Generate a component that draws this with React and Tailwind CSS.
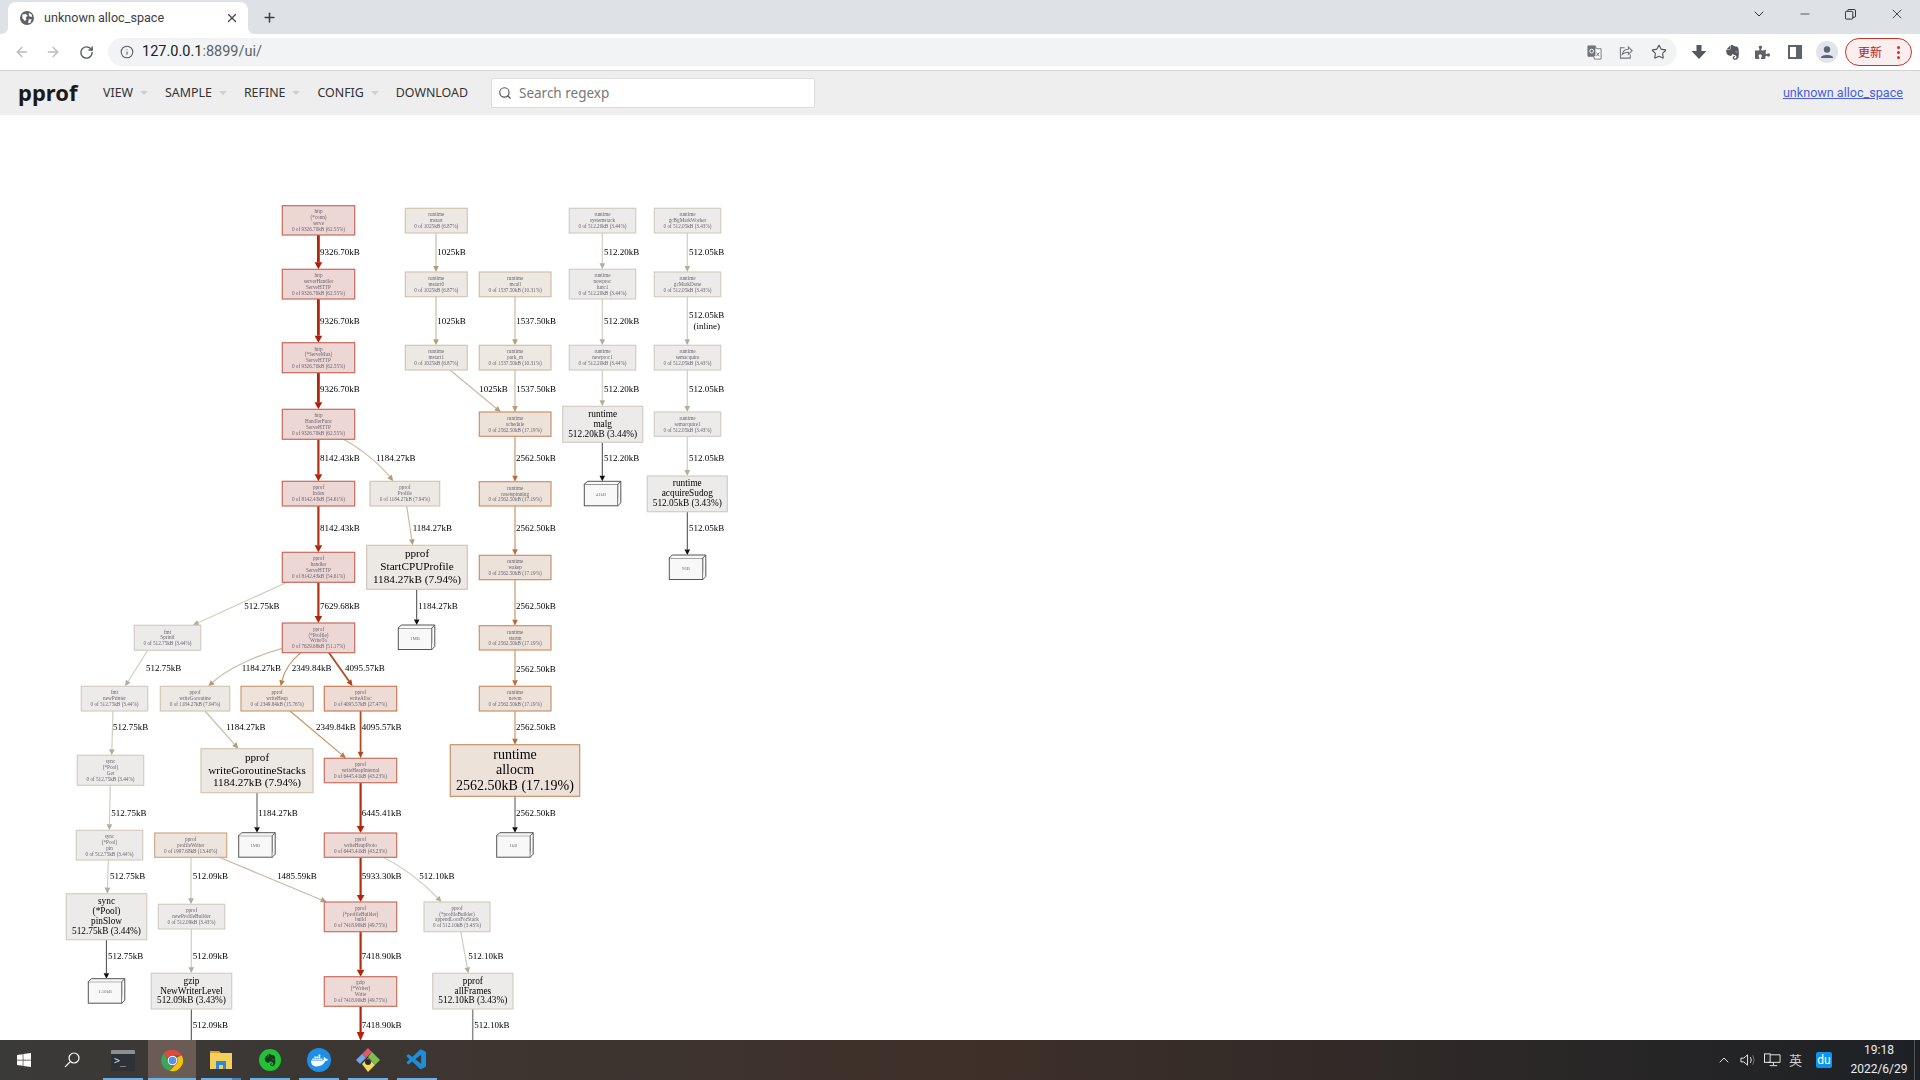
import { ArrowLeft, ArrowRight, RotateCw, Info, Plus, X, Star, ChevronDown, ChevronUp, Minus, Search } from "lucide-react";
import { FaEvernote, FaDocker, FaWindows, FaPuzzlePiece } from "react-icons/fa";
import { VscVscode } from "react-icons/vsc";

const PAL = {
  red: ["#edd7d5", "#c8695c"],
  red2: ["#edd9d5", "#c9705f"],
  alloc: ["#eddcd5", "#c97c55"],
  orange: ["#ede2d9", "#cb9166"],
  heap: ["#ede3da", "#cc9c70"],
  pw: ["#ede5dd", "#d0a885"],
  mcall: ["#ede8e2", "#d2bfa6"],
  tan: ["#ece9e4", "#d3c6b2"],
  grey: ["#ecebe9", "#d2cec4"],
};

// graph nodes, coordinates are page pixels
const NODES = [
  [282.3, 205.7, 72.4, 29.3, "red", ["http", "(*conn)", "serve", "0 of 9326.70kB (62.55%)"]],
  [282.3, 269.3, 72.4, 29.7, "red", ["http", "serverHandler", "ServeHTTP", "0 of 9326.70kB (62.55%)"]],
  [282.3, 342.7, 72.4, 30, "red", ["http", "(*ServeMux)", "ServeHTTP", "0 of 9326.70kB (62.55%)"]],
  [282.3, 409.3, 72.4, 30, "red", ["http", "HandlerFunc", "ServeHTTP", "0 of 9326.70kB (62.55%)"]],
  [282.3, 481.3, 72.4, 24.7, "red", ["pprof", "Index", "0 of 8142.43kB (54.61%)"]],
  [282.3, 552.3, 72.4, 30, "red", ["pprof", "handler", "ServeHTTP", "0 of 8142.43kB (54.61%)"]],
  [282.3, 623, 72.4, 29.7, "red", ["pprof", "(*Profile)", "WriteTo", "0 of 7629.68kB (51.17%)"]],
  [370, 481.3, 69.7, 24.7, "tan", ["pprof", "Profile", "0 of 1184.27kB (7.94%)"]],
  [134.3, 625.3, 66.4, 25, "grey", ["fmt", "Sprintf", "0 of 512.75kB (3.44%)"]],
  [81.3, 686.3, 66.4, 24.7, "grey", ["fmt", "newPrinter", "0 of 512.75kB (3.44%)"]],
  [160.3, 686.3, 69.4, 24.7, "tan", ["pprof", "writeGoroutine", "0 of 1184.27kB (7.94%)"]],
  [241, 686.3, 72.3, 24.7, "heap", ["pprof", "writeHeap", "0 of 2349.84kB (15.76%)"]],
  [324.3, 686.3, 72.4, 24.7, "alloc", ["pprof", "writeAlloc", "0 of 4095.57kB (27.47%)"]],
  [405.3, 208.3, 62, 24.7, "tan", ["runtime", "mstart", "0 of 1025kB (6.87%)"]],
  [405.3, 272, 62, 24.7, "tan", ["runtime", "mstart0", "0 of 1025kB (6.87%)"]],
  [405.3, 345.3, 62, 24.7, "tan", ["runtime", "mstart1", "0 of 1025kB (6.87%)"]],
  [479.3, 272, 71.7, 24.7, "mcall", ["runtime", "mcall", "0 of 1537.50kB (10.31%)"]],
  [479.3, 345.3, 71.7, 24.7, "mcall", ["runtime", "park_m", "0 of 1537.50kB (10.31%)"]],
  [479.3, 412, 71.7, 24.3, "orange", ["runtime", "schedule", "0 of 2562.50kB (17.19%)"]],
  [479.3, 481.7, 71.7, 24.3, "orange", ["runtime", "resetspinning", "0 of 2562.50kB (17.19%)"]],
  [479.3, 555.3, 71.7, 24.4, "orange", ["runtime", "wakep", "0 of 2562.50kB (17.19%)"]],
  [479.3, 625.7, 71.7, 24.3, "orange", ["runtime", "startm", "0 of 2562.50kB (17.19%)"]],
  [479.3, 686.3, 71.7, 24.7, "orange", ["runtime", "newm", "0 of 2562.50kB (17.19%)"]],
  [569.3, 208.3, 66.4, 24.7, "grey", ["runtime", "systemstack", "0 of 512.20kB (3.44%)"]],
  [569.3, 269.3, 66.4, 29.7, "grey", ["runtime", "newproc", "func1", "0 of 512.20kB (3.44%)"]],
  [569.3, 345.3, 66.4, 24.7, "grey", ["runtime", "newproc1", "0 of 512.20kB (3.44%)"]],
  [654.3, 208.3, 66.4, 24.7, "grey", ["runtime", "gcBgMarkWorker", "0 of 512.05kB (3.43%)"]],
  [654.3, 272, 66.4, 24.7, "grey", ["runtime", "gcMarkDone", "0 of 512.05kB (3.43%)"]],
  [654.3, 345.3, 66.4, 24.7, "grey", ["runtime", "semacquire", "0 of 512.05kB (3.43%)"]],
  [654.3, 412, 66.4, 24.3, "grey", ["runtime", "semacquire1", "0 of 512.05kB (3.43%)"]],
  [77.3, 755.3, 66.4, 30, "grey", ["sync", "(*Pool)", "Get", "0 of 512.75kB (3.44%)"]],
  [76.3, 830.3, 66.4, 29.7, "grey", ["sync", "(*Pool)", "pin", "0 of 512.75kB (3.44%)"]],
  [154.7, 833, 72, 24.3, "pw", ["pprof", "profileWriter", "0 of 1997.68kB (13.40%)"]],
  [158.3, 904.3, 66.4, 24.7, "grey", ["pprof", "newProfileBuilder", "0 of 512.09kB (3.43%)"]],
  [324.3, 758.3, 72.4, 24.4, "red2", ["pprof", "writeHeapInternal", "0 of 6445.41kB (43.23%)"]],
  [324.3, 833, 72.4, 24.3, "red2", ["pprof", "writeHeapProto", "0 of 6445.41kB (43.23%)"]],
  [324.3, 902, 72.4, 29.7, "red2", ["pprof", "(*profileBuilder)", "build", "0 of 7418.90kB (49.75%)"]],
  [324.3, 976.7, 72.4, 29.6, "red2", ["gzip", "(*Writer)", "Write", "0 of 7418.90kB (49.75%)"]],
  [424, 902, 66, 29.7, "grey", ["pprof", "(*profileBuilder)", "appendLocsForStack", "0 of 512.10kB (3.43%)"]],
];

// nodes with flat weight, larger text
const BIG = [
  [366.7, 545.3, 100.6, 44, "tan", ["pprof", "StartCPUProfile", "1184.27kB (7.94%)"], 11.2, 13],
  [201, 748.7, 112, 44, "tan", ["pprof", "writeGoroutineStacks", "1184.27kB (7.94%)"], 11.2, 12.8],
  [450.3, 744.7, 129.4, 51.6, "orange", ["runtime", "allocm", "2562.50kB (17.19%)"], 14, 15.4],
  [562.7, 406.3, 80, 36, "grey", ["runtime", "malg", "512.20kB (3.44%)"], 9.3, 9.9],
  [647.3, 476, 80, 35.7, "grey", ["runtime", "acquireSudog", "512.05kB (3.43%)"], 9.3, 9.9],
  [66.3, 893.7, 80.4, 46, "grey", ["sync", "(*Pool)", "pinSlow", "512.75kB (3.44%)"], 9.3, 9.9],
  [151.3, 973.3, 80.4, 35.7, "grey", ["gzip", "NewWriterLevel", "512.09kB (3.43%)"], 9.3, 9.9],
  [432.7, 973.3, 80.3, 35.7, "grey", ["pprof", "allFrames", "512.10kB (3.43%)"], 9.3, 9.9],
];

const LEAVES = [
  [398.3, 625, "1MB"],
  [238.7, 832.7, "1MB"],
  [496.7, 832.7, "1kB"],
  [584.3, 481.3, "41kB"],
  [669.3, 555, "96B"],
  [88.3, 978.7, "1.50kB"],
];

const EDGE = {
  red: ["#b3230e", "#b01c08", 2.8, 7],
  red2: ["#b42f10", "#b0260a", 2.2, 7],
  alloc: ["#b24c20", "#b0461a", 1.8, 6.5],
  orange: ["#dcb99c", "#b96d3a", 1.8, 6],
  heap: ["#c4925f", "#b97c42", 1.1, 6],
  tan: ["#cdbba0", "#b39c76", 1.2, 6],
  grey: ["#d2cdbf", "#b3ad9a", 1.2, 6],
  dark: ["#444444", "#111111", 1, 5.5],
  gray: ["#8a8a8a", "#111111", 1.5, 5.5],
};

// [x1, y1, x2, y2, kind, label, labelX, labelY, curve control points]
const EDGES = [
  [318.4, 235, 318.4, 269.3, "red", "9326.70kB", 320, 251.7],
  [318.4, 299, 318.4, 342.7, "red", "9326.70kB", 320, 320.7],
  [318.4, 372.7, 318.4, 409.3, "red", "9326.70kB", 320, 388.7],
  [318.4, 439.3, 318.4, 481.3, "red2", "8142.43kB", 320, 458.3],
  [318.4, 506, 318.4, 552.3, "red2", "8142.43kB", 320, 527.7],
  [318.4, 582.3, 318.4, 623, "red2", "7629.68kB", 320, 605.7],
  [343.3, 439.3, 393.3, 481.3, "tan", "1184.27kB", 376, 458.3, [358, 447, 378, 462]],
  [406.7, 506, 412.7, 545.3, "tan", "1184.27kB", 412.7, 527.7],
  [416.7, 589.3, 416.7, 625, "dark", "1184.27kB", 418.3, 605.7],
  [286, 582.7, 192.7, 625.3, "grey", "512.75kB", 244.3, 605.7],
  [147.7, 650.3, 125, 686.3, "grey", "512.75kB", 146, 668.3],
  [282.3, 648.3, 208.3, 686.3, "tan", "1184.27kB", 241.7, 668.3, [258, 655, 228, 668]],
  [300.7, 652.7, 280.7, 686.3, "heap", "2349.84kB", 291.7, 668.3, [290, 662, 284, 672]],
  [329, 652.7, 352.7, 686.3, "alloc", "4095.57kB", 345, 668.3],
  [205, 711, 238.3, 748.7, "tan", "1184.27kB", 226, 726.7],
  [290, 711, 346, 758.3, "heap", "2349.84kB", 316, 726.7],
  [360.6, 711, 360.6, 758.3, "alloc", "4095.57kB", 361.7, 726.7],
  [113, 711, 111.7, 755.3, "grey", "512.75kB", 113, 726.7],
  [110.3, 785.3, 109.3, 830.3, "grey", "512.75kB", 111.3, 812.7],
  [108.3, 860, 107.3, 893.7, "grey", "512.75kB", 110, 875.7],
  [106.4, 939.7, 106.4, 978.7, "dark", "512.75kB", 108, 955.7],
  [257, 792.7, 257, 832.7, "gray", "1184.27kB", 258.3, 812.7],
  [360.6, 782.7, 360.6, 833, "red2", "6445.41kB", 361.7, 812.7],
  [360.6, 857.3, 360.6, 902, "red2", "5933.30kB", 361.7, 875.7],
  [383.3, 857.3, 441.7, 902, "grey", "512.10kB", 419.3, 875.7, [405, 868, 425, 885]],
  [219.3, 857.3, 326.7, 902, "tan", "1485.59kB", 277, 875.7],
  [191, 857.3, 191, 904.3, "grey", "512.09kB", 192.7, 875.7],
  [191.3, 929, 191.3, 973.3, "grey", "512.09kB", 192.7, 955.7],
  [360.6, 931.7, 360.6, 976.7, "red2", "7418.90kB", 361.7, 955.7],
  [460.7, 931.7, 468.3, 973.3, "grey", "512.10kB", 468.3, 955.7],
  [436, 233, 436, 272, "tan", "1025kB", 437.3, 251.7],
  [436, 296.7, 436, 345.3, "tan", "1025kB", 437.3, 320.7],
  [450, 370, 500.7, 412, "tan", "1025kB", 479.3, 388.7],
  [515, 296.7, 515, 345.3, "tan", "1537.50kB", 516.3, 320.7],
  [515, 370, 515, 412, "tan", "1537.50kB", 516.3, 388.7],
  [515, 436.3, 515, 481.7, "orange", "2562.50kB", 516, 458.3],
  [515, 506, 515, 555.3, "orange", "2562.50kB", 516, 527.7],
  [515, 579.7, 515, 625.7, "orange", "2562.50kB", 516, 605.7],
  [515, 650, 515, 686.3, "orange", "2562.50kB", 516, 668.7],
  [515, 711, 515, 744.7, "orange", "2562.50kB", 516, 726.7],
  [515, 796.3, 515, 832.7, "gray", "2562.50kB", 516, 812.7],
  [602.3, 233, 602.3, 269.3, "grey", "512.20kB", 604, 251.7],
  [602.3, 299, 602.3, 345.3, "grey", "512.20kB", 604, 320.7],
  [602.3, 370, 602.3, 406.3, "grey", "512.20kB", 604, 388.7],
  [602.3, 442.3, 602.3, 481.3, "dark", "512.20kB", 604, 458.3],
  [687.3, 233, 687.3, 272, "grey", "512.05kB", 689, 251.7],
  [687.3, 296.7, 687.3, 345.3, "grey", "", 0, 0],
  [687.3, 370, 687.3, 412, "grey", "512.05kB", 689, 388.7],
  [687.3, 436.3, 687.3, 476, "grey", "512.05kB", 689, 458.3],
  [687.3, 511.7, 687.3, 555, "dark", "512.05kB", 689, 527.7],
];

// edges running under the taskbar, no arrow head shown
const OPEN_EDGES = [
  [191.3, 1009, 191.3, 1040, "dark", "512.09kB", 192.7, 1024.7],
  [472.7, 1009, 472.7, 1040, "gray", "512.10kB", 474.3, 1024.7],
];

const Node = ({ n }) => {
  const [x, y, w, h, pal, lines, fs = 5.2, ls = 5.9] = n;
  const [fill, stroke] = PAL[pal];
  const cy = y + h / 2;
  const shift = fs < 6 ? fs * 0.32 : fs * 0.26;
  return (
    <g>
      <rect x={x} y={y} width={w} height={h} fill={fill} stroke={stroke} strokeWidth="1.2" />
      {lines.map((t, i) => (
        <text
          key={i}
          x={x + w / 2}
          y={cy + (i - (lines.length - 1) / 2) * ls + shift}
          fontSize={fs}
          textAnchor="middle"
          fill={fs < 6 ? "#6b6470" : "#000"}
        >
          {t}
        </text>
      ))}
    </g>
  );
};

const Leaf = ({ x, y, label }) => (
  <g fill="#f8f8f8" stroke="#555" strokeWidth="1">
    <rect x={x} y={y + 3} width="33.5" height="21.5" />
    <path d={`M${x} ${y + 3} l3 -3 h33.5 l-3 3 M${x + 33.5} ${y + 24.5} l3 -3 v-21.5`} />
    <text x={x + 16.7} y={y + 14.5} fontSize="4.8" textAnchor="middle" fill="#777" stroke="none">
      {label}
    </text>
  </g>
);

const Edge = ({ e, open }) => {
  const [x1, y1, x2, y2, kind, , , , ctl] = e;
  const [shaft, head, width, len] = EDGE[kind];
  const fromX = ctl ? ctl[2] : x1;
  const fromY = ctl ? ctl[3] : y1;
  const d = Math.hypot(x2 - fromX, y2 - fromY);
  const ux = (x2 - fromX) / d;
  const uy = (y2 - fromY) / d;
  const bx = open ? x2 : x2 - ux * len;
  const by = open ? y2 : y2 - uy * len;
  const hw = kind.startsWith("red") ? 3.8 : 2.8;
  const path = ctl
    ? `M${x1} ${y1} C${ctl[0]} ${ctl[1]} ${ctl[2]} ${ctl[3]} ${bx} ${by}`
    : `M${x1} ${y1} L${bx} ${by}`;
  return (
    <g>
      <path d={path} fill="none" stroke={shaft} strokeWidth={width} />
      {!open && (
        <polygon
          points={`${x2},${y2} ${bx - uy * hw},${by + ux * hw} ${bx + uy * hw},${by - ux * hw}`}
          fill={head}
        />
      )}
    </g>
  );
};

const EdgeLabel = ({ e }) =>
  e[5] ? (
    <text x={e[6]} y={e[7] + 3} fontSize="9" fill="#000">
      {e[5]}
    </text>
  ) : null;

const Graph = () => (
  <svg
    viewBox="0 115 1920 925"
    className="block w-[1920px] h-[925px] bg-white blur-[0.25px] [font-family:'Liberation_Serif',serif]"
  >
    {EDGES.map((e, i) => (
      <Edge key={i} e={e} />
    ))}
    {OPEN_EDGES.map((e, i) => (
      <Edge key={i} e={e} open />
    ))}
    {/* red edge going under the taskbar, head is cut off at the bar */}
    <path d="M360.6 1006.3 L360.6 1032" stroke="#b0260a" strokeWidth="2.2" />
    <polygon points="360.6,1041 356.8,1032 364.4,1032" fill="#b0260a" />
    {NODES.map((n, i) => (
      <Node key={i} n={n} />
    ))}
    {BIG.map((n, i) => (
      <Node key={i} n={n} />
    ))}
    {LEAVES.map((l, i) => (
      <Leaf key={i} x={l[0]} y={l[1]} label={l[2]} />
    ))}
    {EDGES.map((e, i) => (
      <EdgeLabel key={i} e={e} />
    ))}
    {OPEN_EDGES.map((e, i) => (
      <EdgeLabel key={i} e={e} />
    ))}
    <text x="361.7" y="1027.7" fontSize="9">7418.90kB</text>
    <text x="706.7" y="317.7" fontSize="9" textAnchor="middle">512.05kB</text>
    <text x="706.7" y="329" fontSize="9" textAnchor="middle">(inline)</text>
  </svg>
);

const Globe = () => (
  <svg viewBox="0 0 24 24" className="w-[14px] h-[14px] shrink-0">
    <circle cx="12" cy="12" r="12" fill="#5f6368" />
    <path d="M4 6 L10 5 L13 8 L10 11 L11 15 L8 17 L4 12Z M15 3 L20 6 L21 10 L17 10 L15 7Z M15 14 L20 14 L18 20 L14 21Z" fill="#fff" />
  </svg>
);

const TabBar = () => (
  <div className="flex items-end h-[34px] bg-[#dee1e6] shrink-0">
    <div className="relative flex items-center shrink-0 ml-[8px] w-[240px] h-[32px] bg-white rounded-t-lg pl-[12px] pr-[9px] gap-[10px]">
      <svg viewBox="0 0 8 8" className="absolute -left-[7px] bottom-0 w-[7px] h-[7px]">
        <path d="M8 0 V8 H0 Q8 8 8 0Z" fill="#fff" />
      </svg>
      <svg viewBox="0 0 8 8" className="absolute -right-[7px] bottom-0 w-[7px] h-[7px]">
        <path d="M0 0 V8 H8 Q0 8 0 0Z" fill="#fff" />
      </svg>
      <Globe />
      <span className="flex-1 text-[12.6px] text-[#3c4043] [font-family:Roboto,sans-serif] truncate">unknown alloc_space</span>
      <X size={14} strokeWidth={2.2} className="text-[#444]" />
    </div>
    <Plus size={15} strokeWidth={2.4} className="ml-[14px] mb-[9px] text-[#3c4043] shrink-0" />
    <div className="flex-1" />
    <div className="flex items-center h-[34px] text-[#222] pb-[6px]">
      <ChevronDown size={16} strokeWidth={1.4} className="mr-[31px]" />
      <Minus size={14} strokeWidth={1.2} className="mr-[33px]" />
      <svg viewBox="0 0 12 12" className="w-[11px] h-[11px] mr-[33px]" fill="none" stroke="#222" strokeWidth="1">
        <rect x="0.5" y="2.5" width="8" height="8.5" rx="1" />
        <path d="M3 2.5 V1.5 Q3 .5 4 .5 H10 Q11.5 .5 11.5 2 V8 Q11.5 9 10 9 H8.5" />
      </svg>
      <X size={16} strokeWidth={1.2} className="mr-[15px]" />
    </div>
  </div>
);

const Toolbar = () => (
  <div className="flex items-center h-[37px] bg-white border-b border-[#d3d3d3] shrink-0">
    <ArrowLeft size={16} strokeWidth={2} className="ml-[14px] text-[#b8bbbf] shrink-0" />
    <ArrowRight size={16} strokeWidth={2} className="ml-[15px] text-[#b8bbbf] shrink-0" />
    <RotateCw size={15} strokeWidth={2.2} className="ml-[18px] text-[#55595e] shrink-0" />
    <div className="flex items-center shrink-0 ml-[14px] w-[1569px] h-[28px] bg-[#f1f3f4] rounded-full pl-[12px] pr-[10px]">
      <Info size={14} strokeWidth={1.8} className="text-[#55595e]" />
      <span className="ml-[8px] text-[14.5px] text-[#202124] [font-family:Roboto,sans-serif]">
        127.0.0.1<span className="text-[#5f6368]">:8899/ui/</span>
      </span>
      <div className="flex-1" />
      <svg viewBox="0 0 16 16" className="w-[15px] h-[15px]">
        <path d="M1 1 H9 L10 4 H15 V15 H8 L7 12 H1Z" fill="#fff" stroke="#70757a" />
        <path d="M1 1 H9 V12 H1Z" fill="#70757a" />
        <circle cx="5" cy="6.5" r="2" fill="none" stroke="#fff" />
        <path d="M10 8 L13 12 M13 8 L10 12" stroke="#70757a" />
      </svg>
      <svg viewBox="0 0 16 16" className="ml-[17px] w-[15px] h-[15px]" fill="none" stroke="#70757a" strokeWidth="1.1">
        <path d="M14 6 L10 2 V4.5 C6 4.5 4 7 3.5 10 C5 8.5 7 7.7 10 7.7 V10Z" />
        <path d="M6 3 H1.5 V14 H12 V10" />
      </svg>
      <Star size={16} strokeWidth={1.7} className="ml-[17px] text-[#55595e]" />
    </div>
    <svg viewBox="0 0 16 16" className="ml-[14px] w-[16px] h-[16px] shrink-0">
      <path d="M5.5 1 H10.5 V7 H15.5 L8 15 L.5 7 H5.5Z" fill="#55595e" />
    </svg>
    <FaEvernote size={17} className="ml-[17px] text-[#55595e] shrink-0" />
    <FaPuzzlePiece size={15} className="ml-[14px] text-[#5f6368] shrink-0" />
    <svg viewBox="0 0 14 14" className="ml-[18px] w-[14px] h-[14px] shrink-0">
      <rect x="1" y="1" width="12" height="12" fill="#fff" stroke="#5f6368" strokeWidth="2" />
      <rect x="8" y="1" width="5" height="12" fill="#5f6368" />
    </svg>
    <div className="ml-[14px] flex items-end justify-center overflow-hidden shrink-0 w-[22px] h-[22px] rounded-full bg-[#e1e4ea]">
      <svg viewBox="0 0 22 22" className="w-[22px] h-[22px]">
        <circle cx="11" cy="8.5" r="3.2" fill="#5a6478" />
        <path d="M5 16.5 C5 13 17 13 17 16.5 V17 H5Z" fill="#5a6478" />
      </svg>
    </div>
    <div className="ml-[7px] flex items-center shrink-0 w-[67px] h-[28px] rounded-full border border-[#c5352a] bg-[#fbeeee] pl-[12px] pr-[11px]">
      <span className="flex-1 text-[12px] text-[#b3261e] [font-family:'Noto_Sans_CJK_SC',sans-serif]">更新</span>
      <span className="flex flex-col gap-[2px]">
        <i className="block w-[3px] h-[3px] rounded-full bg-[#d93025]" />
        <i className="block w-[3px] h-[3px] rounded-full bg-[#d93025]" />
        <i className="block w-[3px] h-[3px] rounded-full bg-[#d93025]" />
      </span>
    </div>
  </div>
);

const MenuItem = ({ label, arrow }) => (
  <div className="flex items-center gap-[7px]">
    <span className="text-[12.4px] text-[#333] [font-family:'Noto_Sans',sans-serif]">{label}</span>
    {arrow && <span className="w-0 h-0 border-x-[4px] border-x-transparent border-t-[4px] border-t-[#d0d0d0]" />}
  </div>
);

const Header = () => (
  <div className="flex items-center h-[44px] bg-[#eeeeee] pl-[18px] pr-[17px] shrink-0">
    <span className="w-[60px] text-[22px] leading-none font-bold text-[#1a1a1a] -mt-[2px] [font-family:'Noto_Sans',sans-serif]">pprof</span>
    <div className="flex items-center gap-[17px] ml-[25px]">
      <MenuItem label="VIEW" arrow />
      <MenuItem label="SAMPLE" arrow />
      <MenuItem label="REFINE" arrow />
      <MenuItem label="CONFIG" arrow />
      <MenuItem label="DOWNLOAD" />
    </div>
    <div className="flex items-center shrink-0 ml-[23px] w-[324px] h-[30px] bg-white border border-[#dddddd] rounded-[2px] pl-[6px]">
      <Search size={14} strokeWidth={2} className="text-[#555]" />
      <span className="ml-[7px] text-[13.5px] text-[#777] [font-family:'Noto_Sans',sans-serif]">Search regexp</span>
    </div>
    <div className="flex-1" />
    <a className="text-[12.6px] text-[#4a5fe0] underline [font-family:Roboto,sans-serif]">unknown alloc_space</a>
  </div>
);

const ChromeLogo = () => (
  <svg viewBox="0 0 24 24" className="w-[23px] h-[23px]">
    <path d="M12 1 A11 11 0 0 1 21.5 6.5 H12 A5.5 5.5 0 0 0 6.9 10 L3 4.5 A11 11 0 0 1 12 1Z" fill="#e14a3b" />
    <path d="M3 4.5 L7 11.5 A5.5 5.5 0 0 0 12.5 17.5 L9 22.6 A11 11 0 0 1 3 4.5Z" fill="#3aa757" />
    <path d="M21.5 6.5 A11 11 0 0 1 9 22.6 L14.8 16.8 A5.5 5.5 0 0 0 16.5 9 Z" fill="#f4c20d" />
    <circle cx="12" cy="12" r="5" fill="#fff" />
    <circle cx="12" cy="12" r="4" fill="#5b8def" />
  </svg>
);

const Taskbar = () => (
  <div className="flex items-center h-[40px] relative bg-gradient-to-r from-[#3a3a38] via-[#3f3029] to-[#1d2125] shrink-0">
    <FaWindows size={16} className="ml-[16px] text-white shrink-0" />
    <svg viewBox="0 0 16 16" className="ml-[32px] w-[16px] h-[16px] shrink-0" fill="none" stroke="#fff" strokeWidth="1.2">
      <circle cx="10" cy="6" r="5" />
      <path d="M6.3 9.7 L1 15" />
    </svg>
    <div className="ml-[31px] w-[24px] h-[21px] bg-[#2e3236] rounded-[1px] overflow-hidden shrink-0">
      <div className="h-[4px] bg-[#8c8e90]" />
      <div className="text-[10px] leading-[14px] text-[#ddd] pl-[3px] [font-family:'DejaVu_Sans_Mono',monospace]">&gt;_</div>
    </div>
    <div className="ml-[13px] flex items-center justify-center shrink-0 w-[48px] h-[40px] bg-[#6a5c55]">
      <ChromeLogo />
    </div>
    <svg viewBox="0 0 22 20" className="ml-[14px] w-[22px] h-[20px] shrink-0">
      <path d="M0 1 H9 L11 3 H0Z" fill="#d9a021" />
      <rect y="3" width="22" height="16" fill="#f4cf5c" />
      <rect x="6" y="11" width="10" height="8" fill="#2f88d8" />
      <rect x="9" y="15" width="4" height="4" fill="#f4cf5c" />
    </svg>
    <div className="ml-[27px] flex items-center justify-center shrink-0 w-[22px] h-[22px] rounded-full bg-[#21c233]">
      <FaEvernote size={14} className="text-[#17391d]" />
    </div>
    <div className="ml-[26px] flex items-center justify-center shrink-0 w-[24px] h-[24px] rounded-full bg-[#1d8fe8]">
      <FaDocker size={17} className="text-white" />
    </div>
    <svg viewBox="0 0 24 24" className="ml-[25px] w-[24px] h-[24px] shrink-0">
      <path d="M12 6 L18 12 L12 18 L6 12Z" fill="#2a2a2a" />
      <path d="M6 6 L12 0 L16 4 L10 10Z" fill="#e0566b" />
      <path d="M0 12 L6 6 L10 10 L4 16Z" fill="#6ea7f0" />
      <path d="M16 4 L24 12 L19 17 L12 9Z" fill="#7cc04b" />
      <path d="M6 16 L12 10 L19 17 L12 24Z" fill="#f4d95c" />
      <circle cx="12" cy="14" r="3" fill="#2a2a2a" />
    </svg>
    <VscVscode size={24} className="ml-[25px] text-[#1b8fdc] shrink-0" />
    <div className="flex-1" />
    <ChevronUp size={16} strokeWidth={1.4} className="text-[#eee] mr-[8px] shrink-0" />
    <svg viewBox="0 0 18 14" className="w-[17px] h-[14px] mr-[7px] shrink-0" fill="none" stroke="#eee">
      <path d="M1 5 H4 L8 1.5 V12.5 L4 9 H1Z" />
      <path d="M11 4 Q13 7 11 10" />
      <path d="M13.5 2 Q16.5 7 13.5 12" stroke="#777" />
    </svg>
    <svg viewBox="0 0 18 14" className="w-[17px] h-[14px] mr-[8px] shrink-0" fill="none" stroke="#eee">
      <rect x="0.5" y="0.5" width="6" height="9" fill="#2a2a2a" />
      <path d="M6.5 1.5 H17 V9.5 H4 M10 9.5 V12.5 M6 13 H14" />
    </svg>
    <span className="text-[13px] text-[#cfcfcf] mr-[14px] [font-family:'Noto_Sans_CJK_SC',sans-serif]">英</span>
    <span className="flex items-center justify-center w-[16px] h-[16px] rounded-[2px] bg-[#0c94ef] text-[12px] text-white mr-[18px] [font-family:Roboto,sans-serif]">du</span>
    <div className="flex flex-col items-center w-[58px] mr-[12px] text-[12px] leading-[19px] text-[#eee] [font-family:Roboto,sans-serif]">
      <span>19:18</span>
      <span>2022/6/29</span>
    </div>
    <div className="absolute right-[5px] top-0 bottom-0 w-px bg-[#555]" />
    <div className="absolute left-[103px] bottom-0 w-[40px] h-[2px] bg-[#6cb0e8]" />
    <div className="absolute left-[148px] bottom-0 w-[48px] h-[2px] bg-[#6cb0e8]" />
    <div className="absolute left-[201px] bottom-0 w-[31px] h-[2px] bg-[#6cb0e8]" />
    <div className="absolute left-[232px] bottom-0 w-[9px] h-[2px] bg-[#4a86bb]" />
    <div className="absolute left-[250px] bottom-0 w-[40px] h-[2px] bg-[#6cb0e8]" />
    <div className="absolute left-[299px] bottom-0 w-[40px] h-[2px] bg-[#6cb0e8]" />
    <div className="absolute left-[348px] bottom-0 w-[40px] h-[2px] bg-[#6cb0e8]" />
    <div className="absolute left-[397px] bottom-0 w-[40px] h-[2px] bg-[#6cb0e8]" />
  </div>
);

const App = () => {
  return (
    <div className="flex flex-col w-[1920px] h-[1080px] overflow-hidden bg-white">
      <TabBar />
      <Toolbar />
      <Header />
      <div className="flex-1 overflow-hidden">
        <Graph />
      </div>
      <Taskbar />
    </div>
  );
};

export default App;
